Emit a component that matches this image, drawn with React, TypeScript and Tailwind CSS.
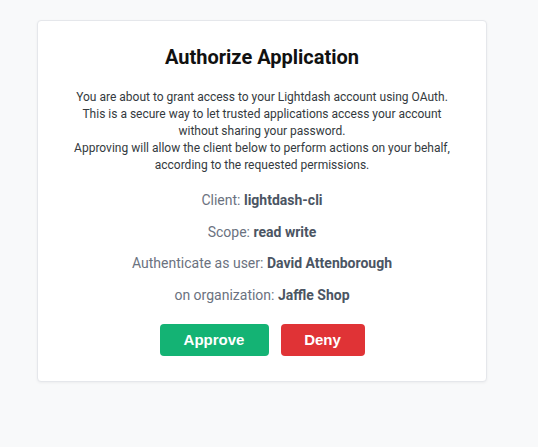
export default function App() {
  return (
    <div className="min-h-screen bg-[#f8f9fa] pt-[20px] font-['Roboto',sans-serif]">
      <div className="ml-[37px] w-[450px] rounded-[4px] border border-[#e5e7eb] bg-white px-6 pb-[25px] pt-[23px] text-center shadow-[0_1px_3px_rgba(0,0,0,0.05)]">
        <h1 className="text-[20px] font-bold leading-[26px] text-[#111]">Authorize Application</h1>
        <p className="mt-[19px] text-[12px] leading-[17px] text-[#343a40]">
          You are about to grant access to your Lightdash account using OAuth.
          <br />
          This is a secure way to let trusted applications access your account
          <br />
          without sharing your password.
          <br />
          Approving will allow the client below to perform actions on your behalf,
          <br />
          according to the requested permissions.
        </p>
        <div className="mt-[17px] flex flex-col gap-[12.7px] text-[14px] leading-[19px] text-[#6b7280]">
          <p>
            Client: <b className="text-[#4b5563]">lightdash-cli</b>
          </p>
          <p>
            Scope: <b className="text-[#4b5563]">read write</b>
          </p>
          <p>
            Authenticate as user: <b className="text-[#4b5563]">David Attenborough</b>
          </p>
          <p>
            on organization: <b className="text-[#4b5563]">Jaffle Shop</b>
          </p>
        </div>
        <div className="mt-[19px] flex justify-center gap-3 font-['Liberation_Sans',Arial,sans-serif]">
          <button className="h-[32px] w-[109px] rounded-[4px] bg-[#14b374] text-[15px] font-bold text-white">
            Approve
          </button>
          <button className="h-[32px] w-[84px] rounded-[4px] bg-[#e03336] text-[15px] font-bold text-white">
            Deny
          </button>
        </div>
      </div>
    </div>
  );
}
